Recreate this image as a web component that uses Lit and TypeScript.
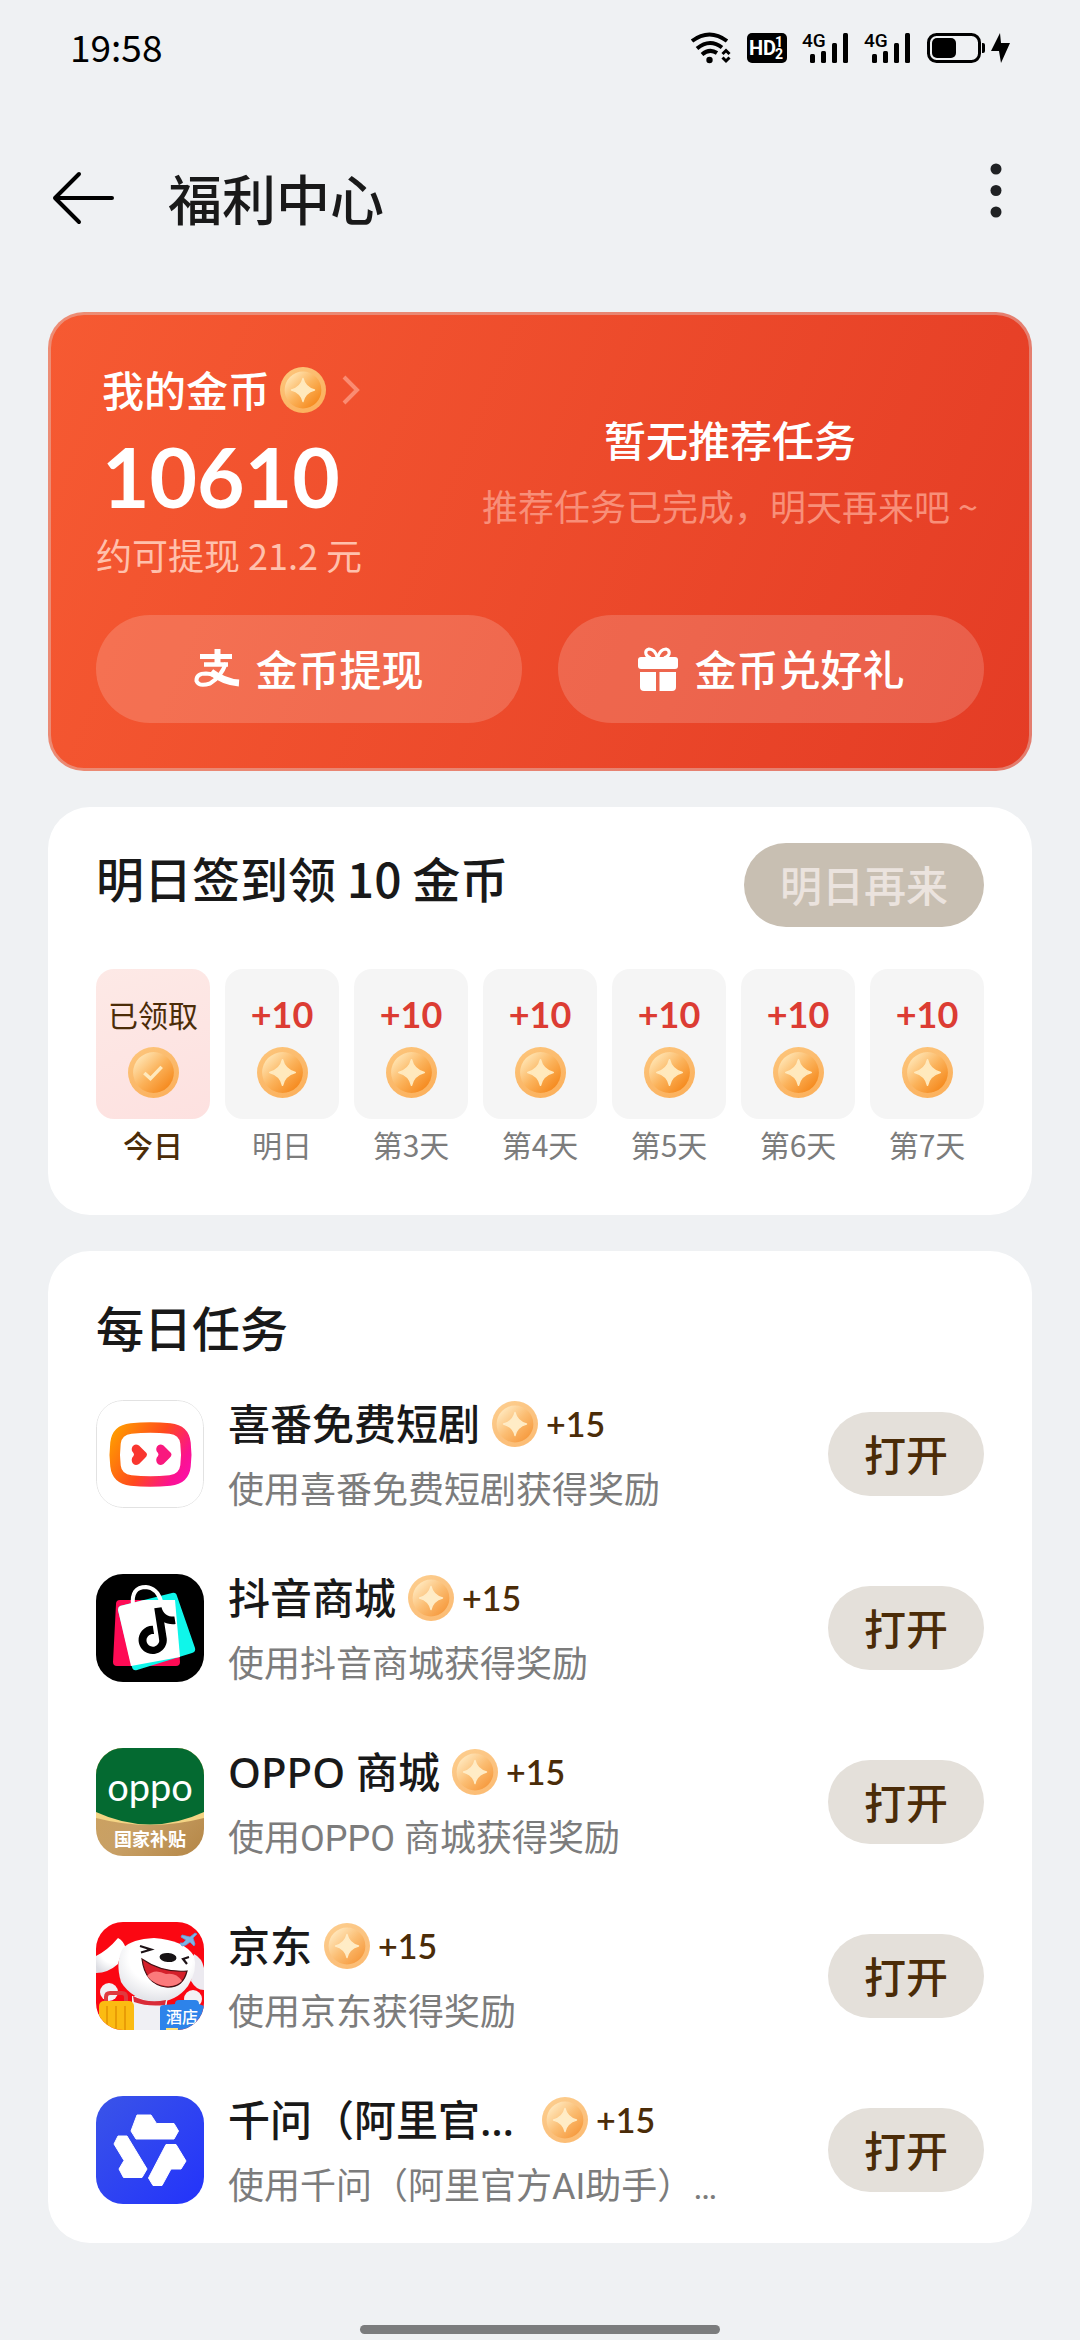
import { LitElement, html, css, svg, nothing } from "lit";
import { customElement, property } from "lit/decorators.js";
import { classMap } from "lit/directives/class-map.js";

interface DayReward {
  amount: string;
  label: string;
  claimed: boolean;
}

interface Task {
  name: string;
  note: string;
  reward: string;
  icon: string;
  clipped?: boolean;
}

const days: DayReward[] = [
  { amount: "已领取", label: "今日", claimed: true },
  { amount: "+10", label: "明日", claimed: false },
  { amount: "+10", label: "第3天", claimed: false },
  { amount: "+10", label: "第4天", claimed: false },
  { amount: "+10", label: "第5天", claimed: false },
  { amount: "+10", label: "第6天", claimed: false },
  { amount: "+10", label: "第7天", claimed: false },
];

const tasks: Task[] = [
  { name: "喜番免费短剧", note: "使用喜番免费短剧获得奖励", reward: "+15", icon: "xifan" },
  { name: "抖音商城", note: "使用抖音商城获得奖励", reward: "+15", icon: "douyin" },
  { name: "OPPO 商城", note: "使用OPPO 商城获得奖励", reward: "+15", icon: "oppo" },
  { name: "京东", note: "使用京东获得奖励", reward: "+15", icon: "jd" },
  { name: "千问（阿里官…", note: "使用千问（阿里官方AI助手）…", reward: "+15", icon: "qianwen", clipped: true },
];

@customElement("coin-icon")
export class CoinIcon extends LitElement {
  @property() mark: "star" | "check" = "star";

  static styles = css`
    :host {
      display: block;
      flex: none;
      width: 46px;
      height: 46px;
    }
    svg {
      display: block;
      width: 100%;
      height: 100%;
    }
  `;

  render() {
    return html`<svg viewBox="0 0 50 50" aria-hidden="true">
      <defs>
        <linearGradient id="rim" x1="0.1" y1="0" x2="0.7" y2="1">
          <stop offset="0" stop-color="#fdc67c" />
          <stop offset="0.6" stop-color="#fbb869" />
          <stop offset="1" stop-color="#fcb15c" />
        </linearGradient>
        <linearGradient id="face" x1="0.12" y1="0.15" x2="0.85" y2="0.9">
          <stop offset="0" stop-color="#ffe3b0" />
          <stop offset="0.5" stop-color="#fbb25a" />
          <stop offset="1" stop-color="#f5891d" />
        </linearGradient>
      </defs>
      <circle cx="25" cy="25" r="25" fill="url(#rim)" />
      <circle cx="25" cy="25" r="20" fill="url(#face)" />
      ${this.mark === "star"
        ? svg`<path d="M25 12.500C26.500 19.500 30 23 37.500 25C30 27 26.500 30.500 25 37.500C23.500 30.500 20 27 12.500 25C20 23 23.500 19.500 25 12.500Z" fill="#ffe9bd" stroke="#ffe9bd" stroke-width="1.500" stroke-linejoin="round" />`
        : svg`<path d="M16 25.500L22 31L33 19.500" fill="none" stroke="#ffe9bd" stroke-width="3.500" />`}
    </svg>`;
  }
}

@customElement("app-logo")
export class AppLogo extends LitElement {
  @property() name = "";

  static styles = css`
    :host {
      display: block;
      flex: none;
      width: 108px;
      height: 108px;
      border-radius: 27px;
      overflow: hidden;
    }
    svg {
      display: block;
      width: 100%;
      height: 100%;
    }
    .wordmark {
      font-family: Lato, sans-serif;
      font-size: 38px;
      font-weight: 400;
    }
    .ribbon {
      font-family: "Noto Sans CJK SC", sans-serif;
      font-size: 18px;
      font-weight: 700;
    }
    .tag {
      font-family: "Noto Sans CJK SC", sans-serif;
      font-size: 16px;
      font-weight: 500;
    }
  `;

  private xifan() {
    return svg`
      <defs>
        <linearGradient id="warm" gradientUnits="userSpaceOnUse" x1="16" y1="32" x2="92" y2="78">
          <stop offset="0" stop-color="#ff9d00" />
          <stop offset="0.5" stop-color="#ff4a1c" />
          <stop offset="0.85" stop-color="#fb1290" />
          <stop offset="1" stop-color="#fb0fa8" />
        </linearGradient>
      </defs>
      <rect x="0.500" y="0.500" width="107" height="107" rx="26" fill="#fff" stroke="#e2e2e2" />
      <path d="M35 28.500Q54 26.500 74 28.500Q88 30 89.500 43Q91 55 89.500 66Q88 79 74 80.500Q54 82.500 35 80.500Q21 79 19.500 66Q18 55 19.500 43Q21 30 35 28.500Z" fill="none" stroke="url(#warm)" stroke-width="10.500" />
      <path d="M51 54.500Q51 56 49 58L43 64Q39 66.500 36.500 63Q34.500 59 37.500 56Q38.500 54.500 37.500 53Q34.500 50 36.500 46.500Q39 43 43 45.500L49 51.500Q51 53 51 54.500Z" fill="#f9362f" />
      <path d="M75.500 54.500Q75.500 56 73.500 58L67.500 64Q63.500 66.500 61 63Q59 59 62 56Q63 54.500 62 53Q59 50 61 46.500Q63.500 43 67.500 45.500L73.500 51.500Q75.500 53 75.500 54.500Z" fill="#f9187e" />`;
  }

  private douyin() {
    return svg`
      <rect width="108" height="108" fill="#000" />
      <path d="M24 26H80L84 88Q84 92 80 92H21Q17 92 17 88L20 30Q20 26 24 26Z" fill="#fe0b55" />
      <path d="M24 32L76 19Q80 18 81 22L99 74Q100 78 96 79L41 96Q37 97 36 93L22 36Q22 33 24 32Z" fill="#0ff6ea" />
      <path d="M24 32L48 26H79L84 83L35 92L22 36Q22 33 24 32Z" fill="#fff" />
      <path d="M37 31Q35 13 50 13Q61 14 65 27" fill="none" stroke="#fff" stroke-width="4" />
      <g transform="translate(35 38) rotate(-9) scale(1.880)">
        <path d="M12.525.02c1.310-.02 2.610-.01 3.910-.02.08 1.530.63 3.090 1.750 4.170 1.120 1.110 2.700 1.620 4.240 1.790v4.030c-1.440-.05-2.890-.35-4.200-.97-.57-.26-1.100-.59-1.620-.93-.01 2.920.01 5.840-.02 8.750-.08 1.400-.54 2.790-1.350 3.940-1.310 1.920-3.580 3.170-5.910 3.210-1.430.08-2.860-.31-4.080-1.030-2.020-1.190-3.440-3.370-3.650-5.710-.02-.5-.03-1-.01-1.490.18-1.900 1.120-3.720 2.580-4.960 1.660-1.440 3.980-2.130 6.150-1.720.02 1.480-.04 2.960-.04 4.440-.99-.32-2.150-.23-3.020.37-.63.41-1.110 1.040-1.360 1.750-.21.51-.15 1.070-.14 1.610.24 1.640 1.820 3.020 3.500 2.870 1.120-.01 2.190-.66 2.770-1.610.19-.33.4-.67.41-1.060.1-1.790.06-3.570.07-5.360.01-4.030-.01-8.050.02-12.070z" fill="#000" />
      </g>`;
  }

  private oppo() {
    return svg`
      <defs>
        <linearGradient id="gold" x1="0" y1="0" x2="1" y2="1">
          <stop offset="0" stop-color="#cfa25a" />
          <stop offset="0.55" stop-color="#c8a066" />
          <stop offset="1" stop-color="#b48646" />
        </linearGradient>
      </defs>
      <rect width="108" height="108" fill="url(#gold)" />
      <path d="M0 0H108V70Q54 84 0 70Z" fill="#f3d484" />
      <path d="M0 0H108V64Q54 89 0 64Z" fill="#046a31" />
      <text class="wordmark" x="54" y="53" text-anchor="middle" fill="#fff">oppo</text>
      <text class="ribbon" x="54" y="98" text-anchor="middle" fill="#fff">国家补贴</text>`;
  }

  private jd() {
    return svg`
      <defs>
        <radialGradient id="fur" cx="0.55" cy="0.3" r="0.75">
          <stop offset="0.55" stop-color="#fff" />
          <stop offset="1" stop-color="#dcdde3" />
        </radialGradient>
      </defs>
      <rect width="108" height="108" fill="#fb0712" />
      <path d="M22 16Q28 19 30 27Q24 32 22 42Q12 51 0 51V34Q12 28 22 16Z" fill="url(#fur)" />
      <path d="M98 32Q106 36 108 46V68Q100 68 95 59Z" fill="#eceaf0" />
      <circle cx="13" cy="70" r="9" fill="#f3f1f4" />
      <circle cx="97" cy="77" r="9" fill="#f3f1f4" />
      <path d="M36 74H72Q70 90 66 108H36Z" fill="#f0f0f4" />
      <path d="M27 26Q36 17 58 16Q88 18 98 34Q102 48 92 64Q80 80 60 80Q36 78 25 60Q19 40 27 26Z" fill="url(#fur)" />
      <path d="M37 74Q52 82 70 78L69 83Q52 85 38 80Z" fill="#d92c38" />
      <path d="M44 24L55 27.500L45 30.500" fill="none" stroke="#1d1216" stroke-width="2.200" />
      <path d="M93 35L87 37L91 42" fill="none" stroke="#1d1216" stroke-width="2.200" />
      <ellipse cx="72" cy="35.500" rx="8.500" ry="4.500" fill="#171315" transform="rotate(5 72 35.500)" />
      <path d="M46 37Q66 51 91 49Q87 66 70 65Q49 62 46 37Z" fill="#d5202b" stroke="#451014" stroke-width="1.200" />
      <path d="M51 54Q58 46 70 52Q80 50 86 59Q80 65 70 64Q57 62 51 54Z" fill="#fb7a7c" />
      <path d="M99 11L94 15L86 13L85 15L90 18L87 21L84 21L86 24L90 23L94 20L98 24L99 22L97 16L101 12Z" fill="#7fb4e4" stroke="#5c9fe0" stroke-width="0.800" stroke-linejoin="round" />
      <path d="M10 80V75Q10 71 14 71H26Q30 71 30 75V80" fill="none" stroke="#df3a3f" stroke-width="4" />
      <rect x="3" y="79" width="35" height="34" rx="5" fill="#fbbb12" />
      <path d="M11 84V108M20 84V108M29 84V108" stroke="#e99c06" stroke-width="2" />
      <path d="M79 82Q79 78 83 78H99Q103 78 103 82L108 84V108H64V86Q64 83 68 83Z" fill="#2d83ea" />
      <rect x="70" y="106" width="12" height="2" fill="#ffe37a" />
      <text class="tag" x="86" y="101" text-anchor="middle" fill="#fff">酒店</text>`;
  }

  private qianwen() {
    return svg`
      <defs>
        <linearGradient id="blue" x1="0" y1="0" x2="1" y2="1">
          <stop offset="0" stop-color="#3a54e8" />
          <stop offset="1" stop-color="#2333fb" />
        </linearGradient>
      </defs>
      <rect width="108" height="108" fill="url(#blue)" />
      <g fill="#fff" stroke="#fff" stroke-width="1" stroke-linejoin="round">
        <path d="M41 19H55L60.500 27.500H78L82.500 35L78 43H40L35 35Z" />
        <path d="M22 40H31L51 73L46 81.500H27.500L23 73L28 64.500L18 48Z" />
        <path d="M70 48.500H80L90 65L85 73H75L66 89.500H57L52.500 82Z" />
      </g>`;
  }

  render() {
    const art: Record<string, () => unknown> = {
      xifan: () => this.xifan(),
      douyin: () => this.douyin(),
      oppo: () => this.oppo(),
      jd: () => this.jd(),
      qianwen: () => this.qianwen(),
    };
    return html`<svg viewBox="0 0 108 108" aria-hidden="true">${art[this.name]?.() ?? nothing}</svg>`;
  }
}

@customElement("status-bar")
export class StatusBar extends LitElement {
  static styles = css`
    :host {
      display: flex;
      align-items: center;
      justify-content: space-between;
      height: 96px;
      padding: 0 70px;
      color: #000;
      font-family: "Noto Sans CJK SC", sans-serif;
    }
    .time {
      padding-bottom: 4px;
      font-size: 37px;
      line-height: 48px;
    }
    .icons {
      display: flex;
      align-items: center;
      gap: 16px;
    }
    .icons svg {
      display: block;
      height: 30px;
      overflow: visible;
    }
    .power {
      display: flex;
      align-items: center;
      gap: 6px;
    }
    .hd {
      font-family: Roboto, sans-serif;
      font-weight: 700;
    }
    .major {
      font-size: 20px;
    }
    .minor {
      font-size: 14px;
    }
    .net {
      font-family: Roboto, sans-serif;
      font-weight: 500;
      font-size: 19px;
    }
  `;

  private signal() {
    return html`<svg width="46" viewBox="0 0 46 30" aria-hidden="true">
      <text class="net" x="-1" y="14">4G</text>
      <rect x="7" y="21" width="5" height="9" rx="1.500" />
      <rect x="18" y="18" width="5" height="12" rx="1.500" />
      <rect x="29" y="10" width="5" height="20" rx="1.500" />
      <rect x="40" y="0" width="5" height="30" rx="1.500" />
    </svg>`;
  }

  render() {
    return html`
      <span class="time">19:58</span>
      <div class="icons">
        <svg width="40" viewBox="0 0 40 30" aria-hidden="true">
          <g fill="none" stroke="#000" stroke-width="4">
            <path d="M1 8Q18.500 -5 36 8" />
            <path d="M6 15.500Q18.500 5 31 14.500" />
            <path d="M11 21.500Q18.500 15 26 20" />
          </g>
          <circle cx="18.500" cy="27" r="3.200" />
          <path d="M31.500 21L35 17.500L38.500 21M31.500 24.500L35 28L38.500 24.500" fill="none" stroke="#000" stroke-width="3" />
        </svg>
        <svg width="40" viewBox="0 0 40 30" aria-hidden="true">
          <rect width="40" height="30" rx="5" />
          <g class="hd" fill="#fff">
            <text class="major" x="2" y="22">HD</text>
            <text class="minor" x="28" y="14">1</text>
            <text class="minor" x="28" y="26">2</text>
          </g>
        </svg>
        ${this.signal()} ${this.signal()}
        <div class="power">
          <svg width="58" viewBox="0 0 58 30" aria-hidden="true">
            <rect x="1.500" y="1.500" width="51" height="27" rx="8" fill="none" stroke="#000" stroke-width="3" />
            <rect x="5" y="5" width="24" height="20" rx="5" />
            <path d="M55 10H56Q58 10 58 12V18Q58 20 56 20H55Z" />
          </svg>
          <svg width="19" viewBox="0 0 19 30" aria-hidden="true">
            <path d="M9 0L0 18H8L10 30L19 10H10Z" />
          </svg>
        </div>
      </div>
    `;
  }
}

@customElement("app-root")
export class AppRoot extends LitElement {
  static styles = css`
    :host {
      display: flex;
      flex-direction: column;
      box-sizing: border-box;
      min-height: 100vh;
      padding-bottom: 6px;
      background: #eff1f3;
      color: #191919;
      font-family: "Noto Sans CJK SC", sans-serif;
    }
    h1,
    h2,
    h3,
    p,
    ul,
    ol {
      margin: 0;
      padding: 0;
      list-style: none;
    }
    h1,
    h2,
    h3 {
      font-weight: 500;
    }
    button {
      border: 0;
      padding: 0;
      background: none;
      color: inherit;
      font: inherit;
    }
    .appbar {
      display: flex;
      align-items: center;
      height: 204px;
      padding: 0 48px;
      gap: 54px;
    }
    .appbar h1 {
      flex: 1;
      font-size: 54px;
      line-height: 72px;
    }
    .appbar svg {
      display: block;
    }
    .menu {
      padding: 0 12px 14px 12px;
    }
    main {
      display: flex;
      flex-direction: column;
      gap: 36px;
      margin: 12px 48px 0;
    }
    .balance {
      display: flex;
      flex-direction: column;
      gap: 39px;
      padding: 45px;
      border: 3px solid rgba(226, 205, 200, 0.45);
      border-radius: 36px;
      background: linear-gradient(112deg, #f65a32, #e43c25) border-box;
      color: #fff;
    }
    .summary {
      display: grid;
      grid-template-columns: 380px 1fr;
    }
    .coins {
      display: flex;
      align-items: center;
      gap: 10px;
      height: 60px;
      padding-left: 6px;
      font-size: 42px;
      font-weight: 500;
    }
    .caption {
      padding-bottom: 4px;
    }
    .coins svg {
      margin-left: 6px;
    }
    .total {
      padding-left: 6px;
      font-family: Lato, sans-serif;
      font-size: 82px;
      font-weight: 700;
      line-height: 112px;
    }
    .worth {
      font-size: 36px;
      line-height: 44px;
      color: #ffc0ac;
    }
    .idle {
      display: flex;
      flex-direction: column;
      gap: 12px;
      padding-top: 52px;
      text-align: center;
      white-space: nowrap;
    }
    .idle h2 {
      font-size: 42px;
      line-height: 54px;
    }
    .idle p {
      font-size: 36px;
      line-height: 54px;
      color: #f88f79;
    }
    .actions {
      display: grid;
      grid-template-columns: 1fr 1fr;
      gap: 36px;
    }
    .action {
      display: flex;
      align-items: center;
      justify-content: center;
      gap: 15px;
      height: 108px;
      border-radius: 54px;
      background: rgba(255, 255, 255, 0.17);
      font-size: 42px;
      font-weight: 500;
    }
    .card {
      padding: 36px 48px 52px;
      border-radius: 42px;
      background: #fff;
    }
    .title {
      font-size: 48px;
      line-height: 68px;
    }
    .checkin {
      display: flex;
      align-items: flex-start;
      justify-content: space-between;
      margin-bottom: 42px;
    }
    .pill {
      flex: none;
      width: 156px;
      height: 84px;
      padding-bottom: 4px;
      border-radius: 42px;
      background: #e4e0da;
      color: #4b2c08;
      font-family: "Noto Sans CJK SC", sans-serif;
      font-size: 42px;
      font-weight: 500;
    }
    .pill.done {
      width: 240px;
      background: #c8bfb2;
      color: #ebe3de;
    }
    .days {
      display: grid;
      grid-template-columns: repeat(7, 1fr);
      gap: 15px;
    }
    .day {
      display: flex;
      flex-direction: column;
      gap: 6px;
      text-align: center;
      white-space: nowrap;
    }
    .tile {
      display: flex;
      flex-direction: column;
      align-items: center;
      gap: 12px;
      box-sizing: border-box;
      height: 150px;
      padding-top: 24px;
      border-radius: 18px;
      background: #f5f5f5;
    }
    .tile coin-icon {
      width: 51px;
      height: 51px;
    }
    .amount {
      font-family: Lato, "Noto Sans CJK SC", sans-serif;
      font-size: 36px;
      font-weight: 700;
      line-height: 42px;
      color: #dc3c33;
    }
    .label {
      font-size: 30px;
      line-height: 38px;
      color: #7c7c7c;
    }
    .claimed .tile {
      background: linear-gradient(160deg, #fde9e6, #fde1e0);
    }
    .claimed .amount {
      font-family: "Noto Sans CJK SC", sans-serif;
      font-size: 30px;
      font-weight: 400;
      color: #4b2c08;
    }
    .claimed .label {
      font-weight: 500;
      color: #4b2c08;
    }
    .tasks {
      padding-top: 41px;
      padding-bottom: 39px;
    }
    .tasks ul {
      display: flex;
      flex-direction: column;
      gap: 66px;
      margin-top: 40px;
    }
    .task {
      display: flex;
      align-items: center;
      gap: 24px;
      height: 108px;
    }
    .info {
      flex: 1;
      display: flex;
      flex-direction: column;
      gap: 16px;
      padding-top: 4px;
      white-space: nowrap;
    }
    .heading {
      display: flex;
      align-items: center;
      gap: 12px;
    }
    .heading h3 {
      font-family: "Noto Sans", "Noto Sans CJK SC", sans-serif;
      font-size: 42px;
      line-height: 54px;
    }
    .heading .clipped {
      width: 302px;
    }
    .heading coin-icon {
      opacity: 0.85;
    }
    .reward {
      margin-left: -4px;
      font-family: Lato, sans-serif;
      font-size: 34px;
      font-weight: 600;
      line-height: 54px;
      color: #4b2c08;
    }
    .note {
      font-family: Roboto, "Noto Sans CJK SC", sans-serif;
      font-size: 36px;
      line-height: 48px;
      color: #7c7c7c;
    }
    .home {
      align-self: center;
      width: 360px;
      height: 9px;
      margin-top: auto;
      border-radius: 5px;
      background: #7b7c7d;
    }
  `;

  private day(d: DayReward) {
    return html`<li class=${classMap({ day: true, claimed: d.claimed })}>
      <div class="tile">
        <span class="amount">${d.amount}</span>
        <coin-icon mark=${d.claimed ? "check" : "star"}></coin-icon>
      </div>
      <span class="label">${d.label}</span>
    </li>`;
  }

  private task(t: Task) {
    return html`<li class="task">
      <app-logo name=${t.icon}></app-logo>
      <div class="info">
        <div class="heading">
          <h3 class=${classMap({ clipped: !!t.clipped })}>${t.name}</h3>
          <coin-icon></coin-icon>
          <span class="reward">${t.reward}</span>
        </div>
        <p class="note">${t.note}</p>
      </div>
      <button class="pill">打开</button>
    </li>`;
  }

  render() {
    return html`
      <status-bar></status-bar>
      <header class="appbar">
        <button aria-label="返回">
          <svg width="66" height="60" viewBox="0 0 66 60">
            <path d="M31 6L7 30L31 54M7 30H64" fill="none" stroke="#000" stroke-width="4" stroke-linecap="round" stroke-linejoin="round" />
          </svg>
        </button>
        <h1>福利中心</h1>
        <button class="menu" aria-label="更多">
          <svg width="48" height="60" viewBox="-6 0 48 60" fill="#202224">
            <circle cx="18" cy="8" r="5.500" />
            <circle cx="18" cy="29.500" r="5.500" />
            <circle cx="18" cy="51" r="5.500" />
          </svg>
        </button>
      </header>
      <main>
        <section class="balance">
          <div class="summary">
            <div>
              <button class="coins">
                <span class="caption">我的金币</span>
                <coin-icon></coin-icon>
                <svg width="18" height="30" viewBox="0 0 18 30" aria-hidden="true">
                  <path d="M2 2L15 15L2 28" fill="none" stroke="#fa8c72" stroke-width="4" />
                </svg>
              </button>
              <p class="total">10610</p>
              <p class="worth">约可提现 21.2 元</p>
            </div>
            <div class="idle">
              <h2>暂无推荐任务</h2>
              <p>推荐任务已完成，明天再来吧 ~</p>
            </div>
          </div>
          <div class="actions">
            <button class="action">
              <svg width="46" height="40" viewBox="0 0 46 40" fill="none" stroke="#fff" aria-hidden="true">
                <path d="M23.500 0V15" stroke-width="6" />
                <path d="M6 7.500H38" stroke-width="5" />
                <path d="M10 15.500H34" stroke-width="4.500" />
                <path d="M32 14Q27 28 16 34.500Q5 38 2.500 32Q2 24.500 12 24.500Q20 25 30 31" stroke-width="4" />
                <path d="M17 23Q30 33 45 34" stroke-width="7" />
              </svg>
              <span class="caption">金币提现</span>
            </button>
            <button class="action">
              <svg width="42" height="44" viewBox="0 0 42 44" aria-hidden="true">
                <g fill="none" stroke="#fff" stroke-width="3.200">
                  <path d="M20.500 11Q18 2 12 2Q8 3 9 7Q10 10 14 11" />
                  <path d="M20.500 11Q23 2 29 2Q33 3 32 7Q31 10 27 11" />
                </g>
                <g fill="#fff">
                  <rect x="1" y="10" width="40" height="12" rx="3" />
                  <path d="M3 25H19V44H7Q3 44 3 40Z" />
                  <path d="M22.500 25H39V40Q39 44 35 44H22.500Z" />
                </g>
              </svg>
              <span class="caption">金币兑好礼</span>
            </button>
          </div>
        </section>
        <section class="card">
          <div class="checkin">
            <h2 class="title">明日签到领 10 金币</h2>
            <button class="pill done">明日再来</button>
          </div>
          <ol class="days">
            ${days.map((d) => this.day(d))}
          </ol>
        </section>
        <section class="card tasks">
          <h2 class="title">每日任务</h2>
          <ul>
            ${tasks.map((t) => this.task(t))}
          </ul>
        </section>
      </main>
      <div class="home"></div>
    `;
  }
}
